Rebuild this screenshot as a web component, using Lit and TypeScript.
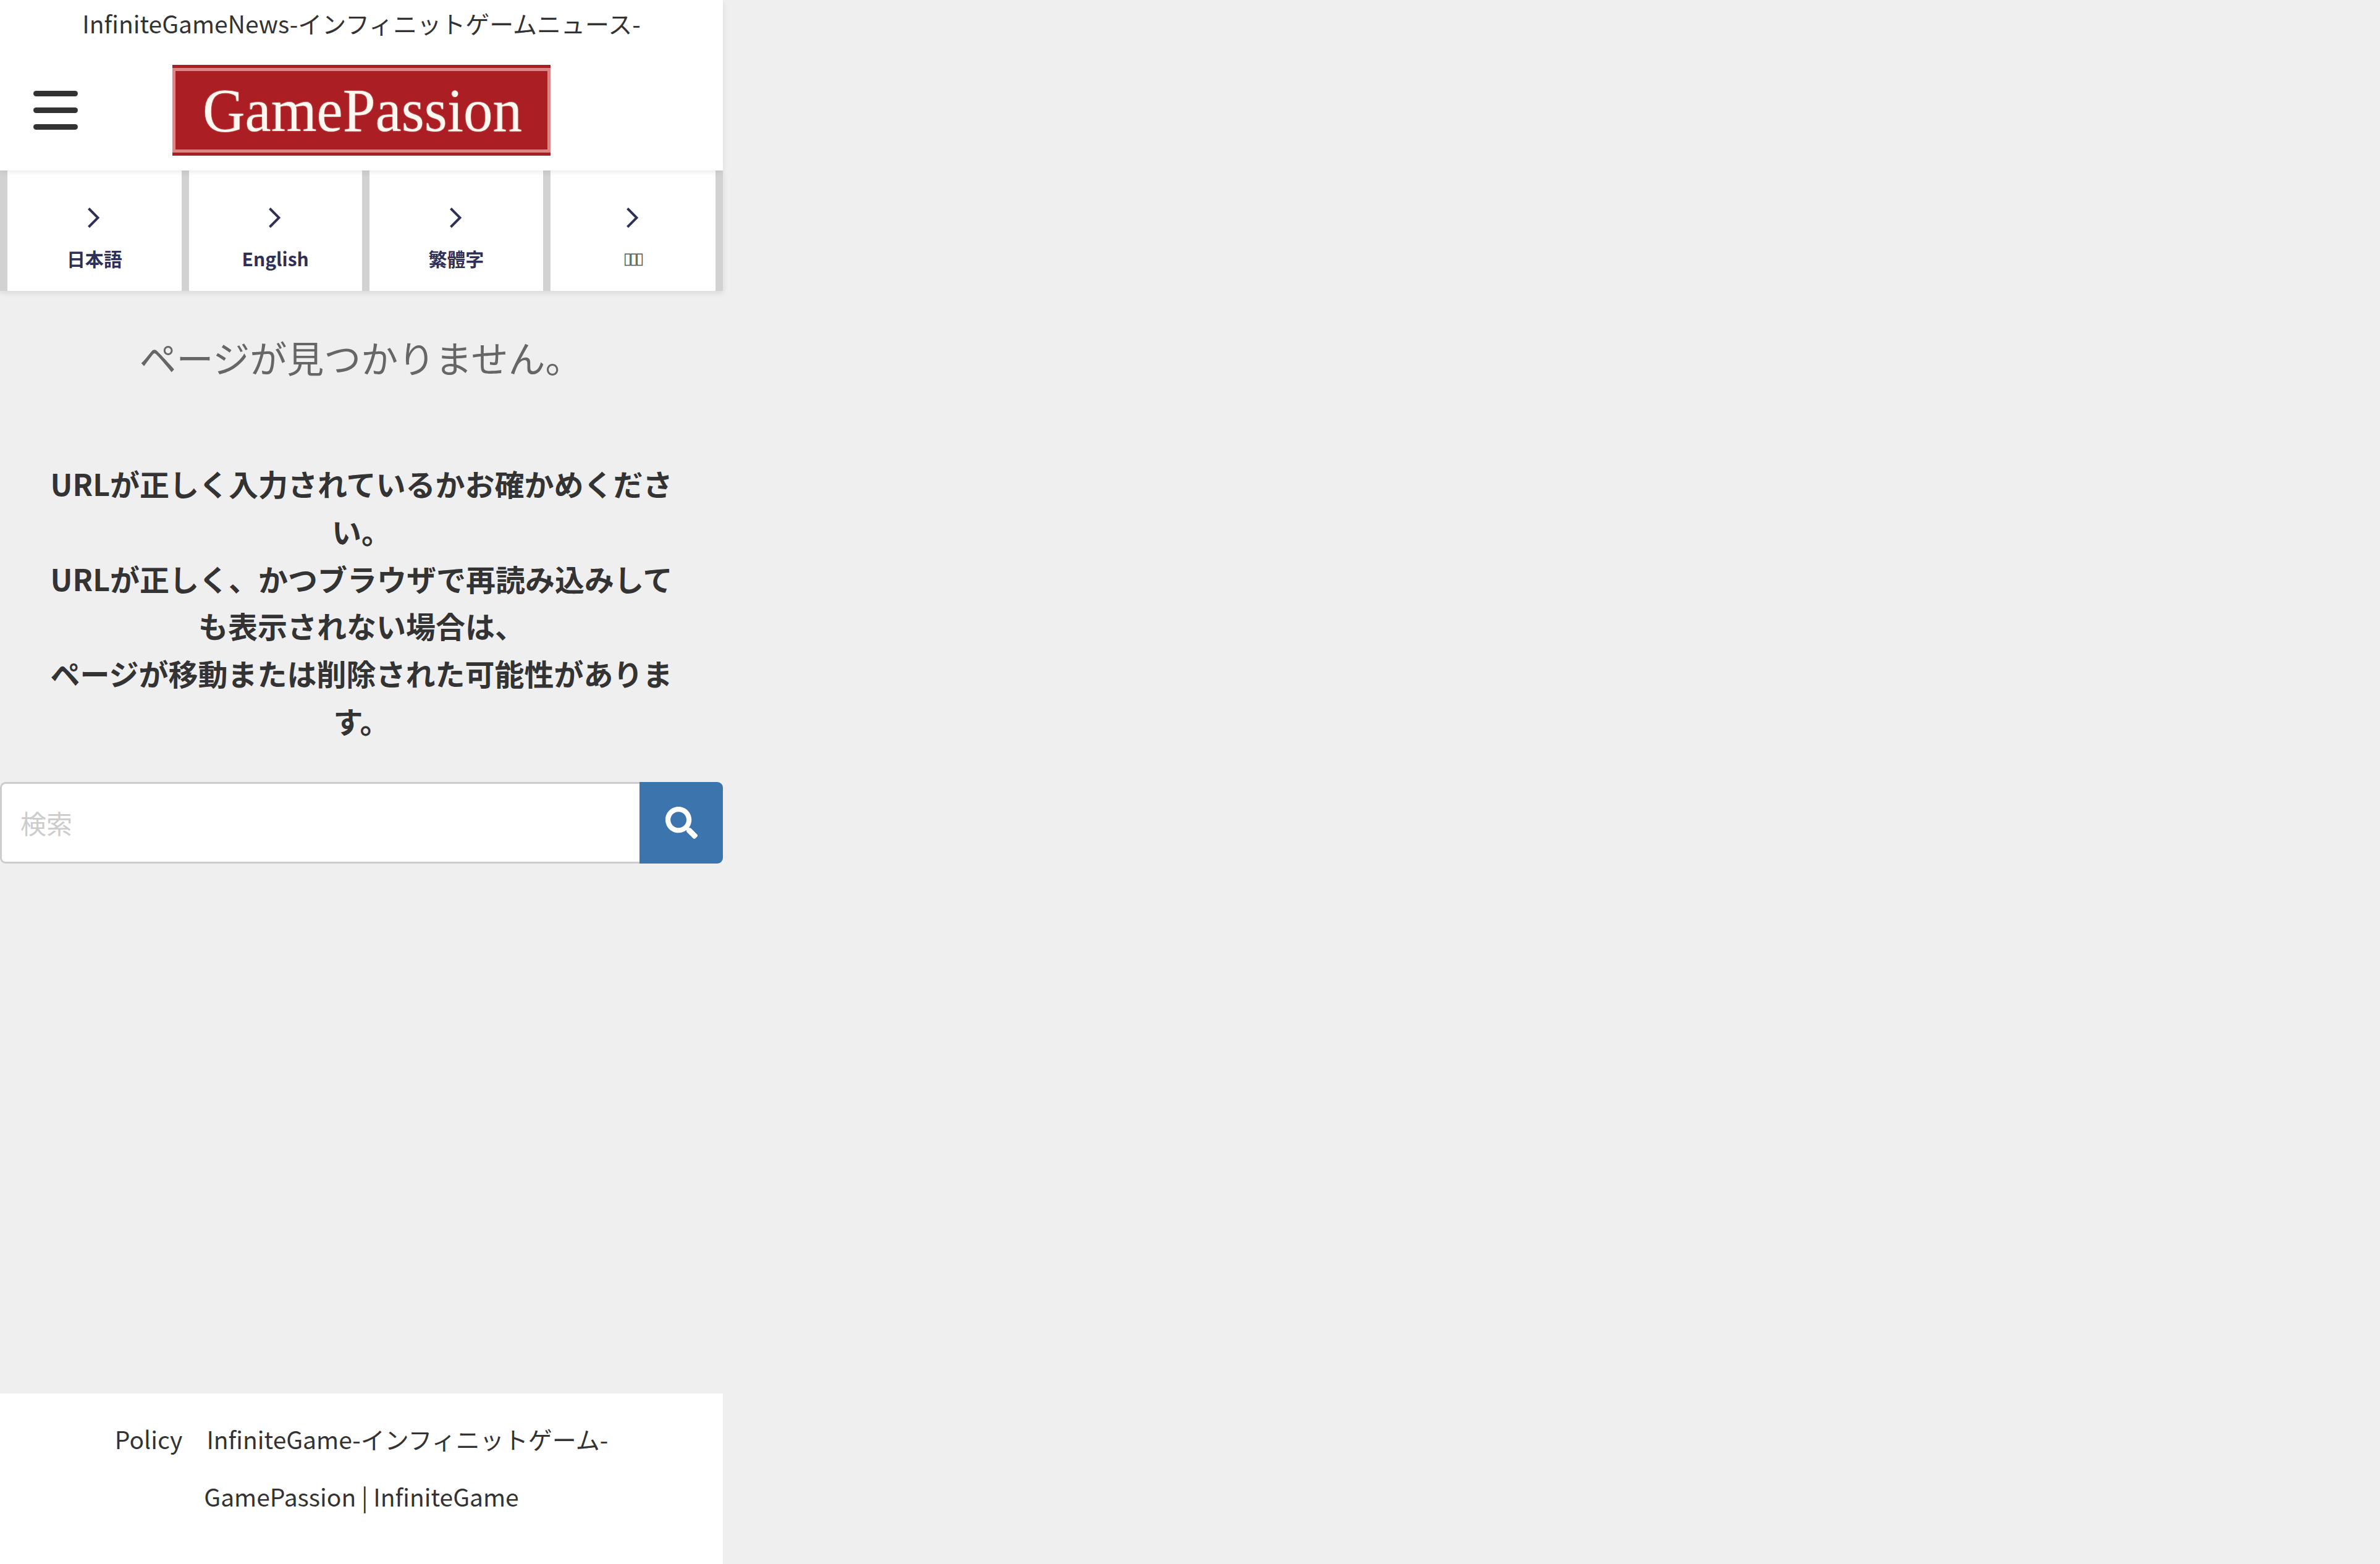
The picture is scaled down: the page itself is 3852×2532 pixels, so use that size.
import { LitElement, html, css } from "lit";
import { customElement } from "lit/decorators.js";

const chevron = html`<svg class="chev" viewBox="0 0 20 33" aria-hidden="true"><path d="M2.5 1.5 L17.5 16.5 L2.5 31.5" fill="none" stroke="currentColor" stroke-width="4"/></svg>`;

@customElement("app-root")
export class AppRoot extends LitElement {
  static styles = css`
    :host { display: block; min-height: 2532px; background: #efefef; font-family: "Noto Sans CJK JP", "Noto Sans", sans-serif; color: #333; }
    * { box-sizing: border-box; }
    .page { width: 1170px; min-height: 2532px; display: flex; flex-direction: column; }
    header { background: #fff; height: 276px; display: flex; flex-direction: column; align-items: center; position: relative; z-index: 2; box-shadow: 0 3px 9px rgba(0,0,0,.08); }
    .tag { font-size: 39px; line-height: 75px; height: 105px; font-weight: 400; white-space: nowrap; }
    .burger { position: absolute; left: 54px; top: 147px; width: 72px; height: 63px; display: flex; flex-direction: column; justify-content: space-between; }
    .burger span { height: 9px; border-radius: 5px; background: #333; }
    .logo { width: 612px; height: 147px; background: #a91e23; padding: 5px 0; }
    .logo div { height: 100%; border: 5px solid #e08586; background: #ab1e23; color: #fff8f0; font-family: "Liberation Serif", serif; font-size: 95px; display: flex; align-items: center; justify-content: center; line-height: 1; padding-left: 3px; }
    .logo span { display: block; transform: scaleY(1.05); text-shadow: 0 0 2px rgba(255,240,230,.6); }
    nav { display: flex; height: 195px; background: #d2d2d2; padding: 0 12px; gap: 12px; box-shadow: 0 3px 9px rgba(0,0,0,.1); }
    .item { background: #fff; display: flex; flex-direction: column; align-items: center; color: #2e3057; font-size: 30px; font-weight: 700; padding-top: 60px; }
    .w1 { width: 282px; } .w2 { width: 280px; } .w3 { width: 282px; } .w4 { width: 267px; }
    .chev { width: 20px; height: 33px; display: block; margin: 0 3px 27px 0; }
    .label { line-height: 45px; height: 45px; }
    .tofu { font-family: "DejaVu Sans", sans-serif; font-weight: 400; font-size: 26px; letter-spacing: -4.5px; color: #555; padding-right: 3px; }
    main { flex: 1; display: flex; flex-direction: column; }
    h1 { margin: 59px 0 118px; text-align: center; font-size: 60px; line-height: 96px; font-weight: 400; color: #666; padding-right: 2px; }
    p { margin: 0 0 61px; padding: 0 72px 0 72px; text-align: center; font-size: 48px; line-height: 76.8px; font-weight: 700; color: #333; }
    .search { display: flex; height: 132px; }
    input { flex: 1; min-width: 0; border: 3px solid #ccc; border-right: 0; border-radius: 9px 0 0 9px; background: #fff; padding: 0 30px; font: 400 42px "Noto Sans CJK JP", sans-serif; outline: none; }
    input::placeholder { color: #ccc; }
    button { width: 135px; border: 0; padding: 0; background: #3c74ad; border-radius: 0 9px 9px 0; display: flex; align-items: center; justify-content: center; }
    button svg { width: 52px; height: 52px; fill: #fff; display: block; margin: 1px 0 0 0; }
    footer { height: 276px; background: #fff; text-align: center; font-size: 39px; font-weight: 400; padding-top: 27px; line-height: 93px; }
    footer .gap { margin-left: 39px; }
  `;

  render() {
    return html`<div class="page" lang="ja">
      <header>
        <div class="tag">InfiniteGameNews-インフィニットゲームニュース-</div>
        <div class="burger"><span></span><span></span><span></span></div>
        <div class="logo"><div><span>GamePassion</span></div></div>
      </header>
      <nav>
        <div class="item w1">${chevron}<span class="label">日本語</span></div>
        <div class="item w2">${chevron}<span class="label">English</span></div>
        <div class="item w3">${chevron}<span class="label">繁體字</span></div>
        <div class="item w4">${chevron}<span class="label tofu">▯▯▯</span></div>
      </nav>
      <main>
        <h1>ページが見つかりません。</h1>
        <p>URLが正しく入力されているかお確かめください。<br>URLが正しく、かつブラウザで再読み込みしても表示されない場合は、<br>ページが移動または削除された可能性があります。</p>
        <form class="search">
          <input placeholder="検索" />
          <button type="button" aria-label="検索"><svg viewBox="0 0 512 512"><path d="M505 442.7L405.3 343c-4.5-4.5-10.6-7-17-7H372c27.6-35.3 44-79.7 44-128C416 93.1 322.9 0 208 0S0 93.1 0 208s93.1 208 208 208c48.3 0 92.7-16.4 128-44v16.3c0 6.4 2.5 12.5 7 17l99.7 99.7c9.4 9.4 24.6 9.4 33.9 0l28.3-28.3c9.4-9.4 9.4-24.6.1-34zM208 336c-70.7 0-128-57.2-128-128 0-70.7 57.2-128 128-128 70.7 0 128 57.2 128 128 0 70.7-57.2 128-128 128z"/></svg></button>
        </form>
      </main>
      <footer>
        <div><span>Policy</span><span class="gap">InfiniteGame-インフィニットゲーム-</span></div>
        <div>GamePassion | InfiniteGame</div>
      </footer>
    </div>`;
  }
}
